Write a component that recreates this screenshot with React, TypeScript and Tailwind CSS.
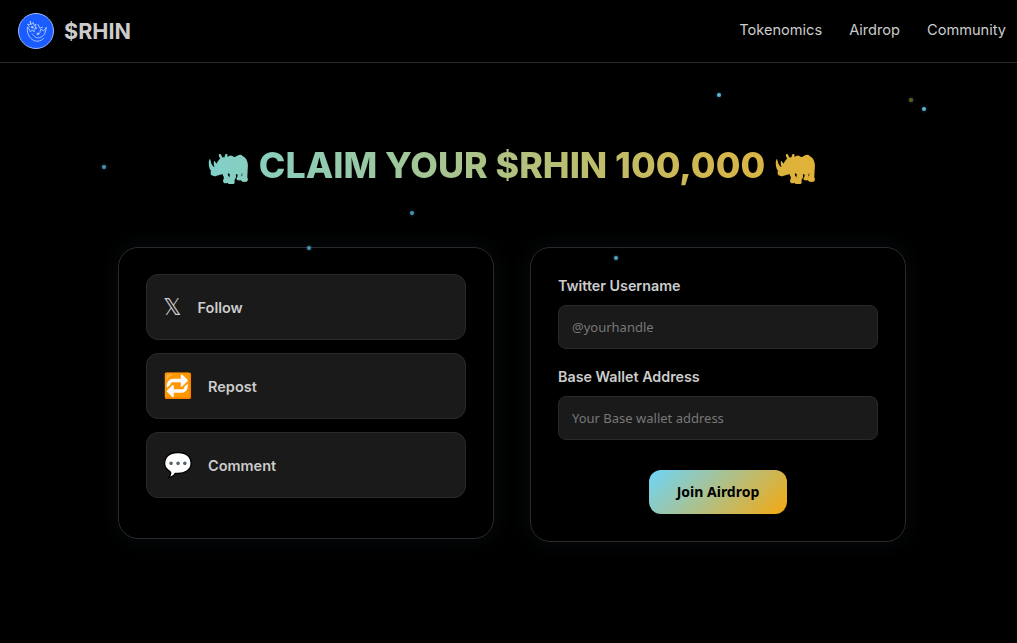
const particles = [
  { x: 718, y: 95, c: "bg-[#5fb2d0]" },
  { x: 910, y: 100, c: "bg-[#5f5f18]" },
  { x: 923, y: 109, c: "bg-[#5fb2d0]" },
  { x: 103, y: 167, c: "bg-[#4a90b0]" },
  { x: 411, y: 213, c: "bg-[#4a90b0]" },
  { x: 308, y: 248, c: "bg-[#4a90b0]" },
  { x: 615, y: 258, c: "bg-[#559fbd]" },
];

function Logo() {
  return (
    <div className="flex h-9 w-9 items-center justify-center rounded-full border border-[#9db8ff] bg-[#1a5cff]">
      <svg viewBox="0 0 36 36" className="h-[34px] w-[34px]" fill="none" stroke="#bcd2ff" strokeWidth="0.900" strokeLinecap="round" strokeLinejoin="round">
        <path d="M12 8l1 3 2-2 1 3 2-1-1 3 2 1-3 1 0 3-2-2-2 2-1-3-2-1 2-2-2-2 3 0z" />
        <path d="M9 14c-1 5 1 10 5 13 4 3 9 2 12-1" />
        <path d="M14 21c2 3 5 5 8 4 3-1 5-3 6-6l1-5-3 4-3-2-1 4" />
        <path d="M20 11l2 4 3-1" />
        <circle cx="14" cy="14" r="0.900" fill="#bcd2ff" />
        <circle cx="20" cy="21" r="0.900" fill="#bcd2ff" />
      </svg>
    </div>
  );
}

function Row({ icon, label, gap }: { icon: React.ReactNode; label: string; gap: string }) {
  return (
    <div className={`flex h-[66px] items-center rounded-xl border border-[#2a2a2a] bg-[#1a1a1a] pl-4 ${gap}`}>
      {icon}
      <span className="relative top-px text-[14.500px] font-semibold text-[#cccccc]">{label}</span>
    </div>
  );
}

function Field({ label, placeholder }: { label: string; placeholder: string }) {
  return (
    <div className="flex flex-col gap-[10px]">
      <label className="text-[14.300px] leading-[18px] font-semibold text-[#cccccc]">{label}</label>
      <input
        readOnly
        placeholder={placeholder}
        className="h-11 w-full rounded-lg border border-[#2a2a2a] bg-[#1a1a1a] px-[13px] font-['Noto_Sans',sans-serif] text-[13px] outline-none placeholder:text-[#777777]"
      />
    </div>
  );
}

export default function App() {
  return (
    <div className="relative h-[643px] w-full overflow-hidden bg-black font-['Inter',sans-serif]">
      <div className="relative w-[1024px]">
        <header className="flex h-[63px] items-center justify-between border-b border-[#2a2a2a] px-[18px]">
          <div className="flex items-center gap-[10px]">
            <Logo />
            <span className="text-[21.600px] font-bold text-[#cccccc]">$RHIN</span>
          </div>
          <nav className="flex items-center gap-[27px] text-[14.600px] font-normal text-[#cccccc]">
            <span>Tokenomics</span>
            <span>Airdrop</span>
            <span>Community</span>
          </nav>
        </header>

        <main className="mx-auto flex w-[788px] flex-col">
          <h1 className="mt-[78px] bg-[linear-gradient(90deg,#72d5e0,#f0ad20)] bg-clip-text text-center text-[35.800px] leading-[48px] font-extrabold text-transparent">
            🦏 CLAIM YOUR $RHIN 100,000 🦏
          </h1>
          <div className="mt-[58px] flex items-start gap-9">
            <section className="flex h-[292px] w-[376px] flex-col gap-[13px] rounded-[20px] border border-[#2a2a2a] bg-black px-[27px] pt-[26px] shadow-[0_0_24px_rgba(120,170,210,0.07)]">
              <Row gap="gap-[16px]" label="Follow" icon={<span className="font-['DejaVu_Sans',sans-serif] text-[23px] leading-none text-[#cccccc]">𝕏</span>} />
              <Row gap="gap-[15px]" label="Repost" icon={<span className="text-[24px] leading-none">🔁</span>} />
              <Row gap="gap-[15px]" label="Comment" icon={<span className="text-[24px] leading-none">💬</span>} />
            </section>
            <section className="flex h-[295px] w-[376px] flex-col rounded-[20px] border border-[#2a2a2a] bg-black px-[27px] pt-[29px] shadow-[0_0_24px_rgba(120,170,210,0.07)]">
              <Field label="Twitter Username" placeholder="@yourhandle" />
              <div className="mt-[19px]">
                <Field label="Base Wallet Address" placeholder="Your Base wallet address" />
              </div>
              <button className="mx-auto mt-[30px] h-11 w-[138px] rounded-xl bg-[linear-gradient(135deg,#6dd5fa,#f5a90f)] pb-0.5 font-['Noto_Sans',sans-serif] text-[14px] font-bold text-black">
                Join Airdrop
              </button>
            </section>
          </div>
        </main>

        {particles.map((p, i) => (
          <span
            key={i}
            className={`absolute h-1 w-1 rounded-full shadow-[0_0_3px_rgba(100,190,225,0.5)] ${p.c}`}
            style={{ left: p.x - 1, top: p.y - 2 }}
          />
        ))}
      </div>
    </div>
  );
}
